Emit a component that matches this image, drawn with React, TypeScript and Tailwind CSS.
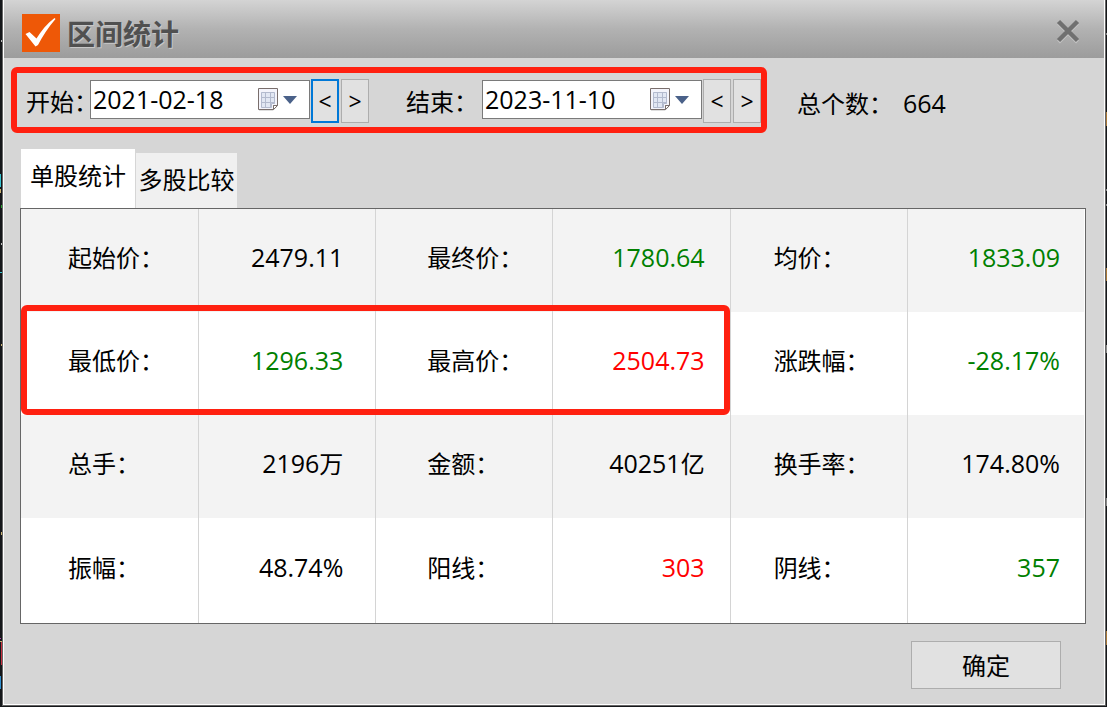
import { useState } from "react";

const digits = "font-['Open_Sans','Noto_Sans_CJK_SC',sans-serif] text-[25px]";

type Cell = { label: string; value: string; unit?: string; tone?: string };

const rows: Cell[][] = [
  [
    { label: "起始价：", value: "2479.11" },
    { label: "最终价：", value: "1780.64", tone: "text-[#008000]" },
    { label: "均价：", value: "1833.09", tone: "text-[#008000]" },
  ],
  [
    { label: "最低价：", value: "1296.33", tone: "text-[#008000]" },
    { label: "最高价：", value: "2504.73", tone: "text-[#ff0000]" },
    { label: "涨跌幅：", value: "-28.17%", tone: "text-[#008000]" },
  ],
  [
    { label: "总手：", value: "2196", unit: "万" },
    { label: "金额：", value: "40251", unit: "亿" },
    { label: "换手率：", value: "174.80%" },
  ],
  [
    { label: "振幅：", value: "48.74%" },
    { label: "阳线：", value: "303", tone: "text-[#ff0000]" },
    { label: "阴线：", value: "357", tone: "text-[#008000]" },
  ],
];

const labelPad = ["pl-[47px]", "border-l pl-[51px]", "border-l pl-[43px]"];
const valuePad = ["pr-8", "pr-[25px]", "pr-6"];

function CalendarIcon() {
  return (
    <svg width="20" height="23" viewBox="0 0 20 23" aria-hidden="true">
      <path d="M1 22.5h14l4-4" fill="none" stroke="#dedede" />
      <path d="M.5.5h19v17h-4v4H.5z" fill="#f4f4fb" stroke="#796e6c" />
      <path d="M15.5 21.5v-4h4z" fill="#fff" stroke="#796e6c" />
      <path d="M3 4h14v12h-3v4H3z" fill="#e2e7f3" />
      <path d="M3.500 4.500h13v11h-3v4h-10zM7.500 4v16M12.500 4v16M3 9.500h14M3 14.500h14" fill="none" stroke="#b3bace" />
    </svg>
  );
}

function DateField({ id, label, initial, wide }: { id: string; label: string; initial: string; wide?: boolean }) {
  const [value, setValue] = useState(initial);
  return (
    <>
      <label htmlFor={id} className={`shrink-0 pt-[10px] whitespace-nowrap ${wide ? "w-[76px]" : "w-16"}`}>
        {label}
      </label>
      <div className="mt-[7px] flex h-[39px] w-[220px] shrink-0 items-center border border-[#7a7a7a] bg-white">
        <input
          id={id}
          value={value}
          onChange={(e) => setValue(e.target.value)}
          className={`${digits} h-full w-[167px] bg-transparent pb-[2px] pl-[2px] outline-none`}
        />
        <button type="button" aria-label={`${label}日历`} className="flex items-center gap-1">
          <CalendarIcon />
          <svg width="16" height="8" viewBox="0 0 16 8" aria-hidden="true">
            <path d="M1 0h14L8 8z" fill="#4a6189" />
          </svg>
        </button>
      </div>
    </>
  );
}

function StepButton({ children, focused }: { children: string; focused?: boolean }) {
  return (
    <button
      type="button"
      className={`mt-[6px] flex h-11 w-7 shrink-0 items-center justify-center bg-[#e1e1e1] font-['Open_Sans',sans-serif] text-[23px] ${
        focused ? "border-2 border-[#0078d7]" : "border border-[#adadad]"
      }`}
    >
      {children}
    </button>
  );
}

export default function App() {
  const [tab, setTab] = useState(0);
  return (
    <div className="relative flex min-h-screen bg-[#15171a] pr-px pb-px pl-[2px] font-['Noto_Sans_CJK_SC',sans-serif] text-2xl leading-9 text-black">
      <svg className="absolute top-0 left-0" width="2" height="707" aria-hidden="true">
        <path d="M1 40h1v2H1zM1 243h1v2H1z" fill="#bbb" />
        <path d="M0 174h1v13H0zM0 272h2v1H0z" fill="#35c3d0" />
        <path d="M0 189h1v4H0zM1 344h1v2H1zM1 532h1v3H1zM0 641h2v1H0z" fill="#c8b070" />
        <path d="M1 205h1v3H1z" fill="#28a030" />
        <path d="M0 638h1v1H0z" fill="#b040b0" />
        <path d="M1 642h1v23H1z" fill="#c83040" />
        <path d="M0 676h1v13H0z" fill="#3090d0" />
      </svg>
      <svg className="absolute top-0 right-0" width="1" height="707" aria-hidden="true">
        <path d="M0 112h1v14H0zM0 268h1v13H0zM0 631h1v14H0z" fill="#a87838" />
        <path d="M0 33h1v2H0zM0 189h1v2H0zM0 204h1v2H0zM0 345h1v8H0zM0 498h1v8H0z" fill="#8a8a8a" />
      </svg>
      <main className="flex min-w-0 flex-1 flex-col border border-t-0 border-[#666]">
        <div className="flex flex-1 flex-col border border-t-0 border-white bg-[#d6d6d6]">
          <header className="flex h-[58px] items-center justify-between bg-linear-to-b from-[#d4d4d4] via-[#b2b2b2] to-[#9c9c9c] pr-6 pl-[18px]">
            <div className="flex items-center gap-[7px] pt-2">
              <svg width="38" height="38" viewBox="0 0 38 38" aria-hidden="true">
                <path d="M0 0h38v38H0z" fill="#ee5807" />
                <path d="M3.500 20l4-2 7 6.500C19 17 25 9.500 32.500 4l1 1C26 14 20.500 22 16 31l-2.500 1.500z" fill="#fff" />
              </svg>
              <h1 className="text-[28px] leading-9 font-bold text-[#505050] [text-shadow:1px_1px_0_#c8c8c8]">区间统计</h1>
            </div>
            <button type="button" aria-label="关闭" className="pt-1">
              <svg width="24" height="25" viewBox="0 0 24 25" aria-hidden="true">
                <path d="M2.500 4l19 19M21.500 4l-19 19" stroke="#c4c4c4" strokeWidth="4" />
                <path d="M2.500 2.500l19 19M21.500 2.500l-19 19" stroke="#707070" strokeWidth="4.500" />
              </svg>
            </button>
          </header>

          <div className="flex items-start pt-[9px] pl-[7px]">
            <div className="flex h-[66px] shrink-0 items-start rounded-md border-6 border-[#ff2010] pl-[9px]">
              <DateField id="start" label="开始：" initial="2021-02-18" />
              <div className="ml-px flex gap-[2px]">
                <StepButton focused>&lt;</StepButton>
                <StepButton>&gt;</StepButton>
              </div>
              <div className="flex items-start pl-[37px]">
                <DateField id="end" label="结束：" initial="2023-11-10" wide />
              </div>
              <div className="ml-px flex gap-[2px]">
                <StepButton>&lt;</StepButton>
                <StepButton>&gt;</StepButton>
              </div>
            </div>
            <p className="flex gap-[10px] pt-[18px] pl-[30px] whitespace-nowrap">
              <span>总个数：</span>
              <span className={digits}>664</span>
            </p>
          </div>

          <div role="tablist" className="mt-4 flex items-end pl-[17px]">
            {["单股统计", "多股比较"].map((name, i) => (
              <button
                key={name}
                type="button"
                role="tab"
                aria-selected={tab === i}
                onClick={() => setTab(i)}
                className={
                  tab === i
                    ? "h-[59px] w-[114px] bg-white pb-2 whitespace-nowrap"
                    : "ml-px h-[55px] w-[101px] bg-[#f0f0f0] pb-1 whitespace-nowrap"
                }
              >
                {name}
              </button>
            ))}
          </div>

          <section className="relative mr-[18px] ml-4 border border-[#666] bg-white pr-px">
            <table className="w-full table-fixed border-separate border-spacing-0">
              <tbody>
                {rows.map((row, r) => (
                  <tr key={r} className="h-[103px] last:h-[105px] odd:bg-[#f3f3f3]">
                    {row.map((cell, c) => [
                      <th
                        key="label"
                        scope="row"
                        className={`border-[#d4d4d4] p-0 pb-2 text-left font-normal whitespace-nowrap ${labelPad[c]}`}
                      >
                        {cell.label}
                      </th>,
                      <td
                        key="value"
                        className={`border-l border-[#d4d4d4] p-0 pb-2 text-right whitespace-nowrap ${valuePad[c]} ${
                          cell.tone ?? ""
                        }`}
                      >
                        <span className={digits}>{cell.value}</span>
                        {cell.unit}
                      </td>,
                    ])}
                  </tr>
                ))}
              </tbody>
            </table>
            <div className="pointer-events-none absolute top-24 left-0 h-[110px] w-2/3 rounded-md border-6 border-[#ff2010]" />
          </section>

          <footer className="flex justify-end pt-[17px] pr-[43px] pb-[15px]">
            <button type="button" className="h-12 w-[150px] border border-[#adadad] bg-[#e1e1e1]">
              确定
            </button>
          </footer>
        </div>
      </main>
    </div>
  );
}
